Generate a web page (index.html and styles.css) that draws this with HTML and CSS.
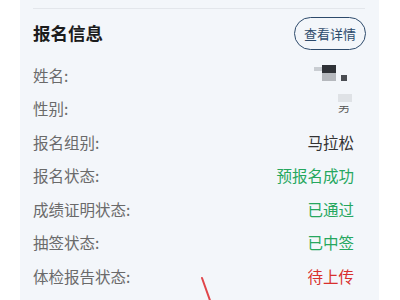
FILE: index.html
```html
<!DOCTYPE html>
<html lang="zh">
<head>
<meta charset="utf-8">
<link rel="stylesheet" href="styles.css">
</head>
<body>
<div class="card">
  <div class="divider"></div>
  <div class="head">
    <h2 class="title">报名信息</h2>
    <button class="detail">查看详情</button>
  </div>
  <div class="rows">
    <div class="row"><span class="label">姓名:</span><span class="value mosaic-name"><i class="m1"></i><i class="m2"></i><i class="m3"></i><i class="m4"></i></span></div>
    <div class="row"><span class="label">性别:</span><span class="value mosaic-sex"><i class="s1"></i><span class="s2">男</span></span></div>
    <div class="row"><span class="label">报名组别:</span><span class="value dark">马拉松</span></div>
    <div class="row"><span class="label">报名状态:</span><span class="value green">预报名成功</span></div>
    <div class="row"><span class="label">成绩证明状态:</span><span class="value green">已通过</span></div>
    <div class="row"><span class="label">抽签状态:</span><span class="value green">已中签</span></div>
    <div class="row"><span class="label">体检报告状态:</span><span class="value red">待上传</span></div>
  </div>
  <svg class="mark" width="30" height="30" viewBox="0 0 30 30"><path d="M2 2 L12 30" stroke="#e0454a" stroke-width="2" fill="none" stroke-linecap="round"/></svg>
</div>
</body>
</html>
```
FILE: styles.css
```css
* { box-sizing: border-box; }
html, body { margin: 0; padding: 0; background: #ffffff; }
body {
  font-family: "Noto Sans CJK SC", "Noto Sans", sans-serif;
  width: 400px; height: 300px; overflow: hidden;
}
.card {
  position: relative;
  margin-left: 20px;
  width: 359px;
  height: 300px;
  background: #f3f6fa;
  padding: 8px 13px 0 13px;
}
.divider { height: 1px; background: #e3e6eb; margin-right: 1px; }
.head {
  display: flex; justify-content: space-between; align-items: center;
  height: 44px; margin-top: 2px;
}
.title { margin: 0; font-size: 17.5px; font-weight: 700; color: #1c1c1c; line-height: 1; }
.detail {
  font-family: inherit;
  height: 33px; width: 72px;
  border: 1.5px solid #2d4a6b; border-radius: 17px;
  background: transparent; color: #2d4a6b;
  font-size: 13px; padding: 0;
}
.rows { margin-top: 3px; }
.row {
  display: flex; justify-content: space-between; align-items: center;
  height: 33.5px;
}
.label { font-size: 15.5px; color: #6a6a6a; }
.value { font-size: 15.5px; margin-right: 12px; }
.dark { color: #333333; }
.green { color: #26a75e; }
.red { color: #d8302d; }
.mosaic-name { position: relative; width: 40px; height: 20px; }
.mosaic-name i { position: absolute; display: block; }
.m1 { left: 0; top: 2px; width: 10px; height: 4px; background: #c9cdd2; }
.m2 { left: 8px; top: 0; width: 14px; height: 8px; background: #2f3237; }
.m3 { left: 8px; top: 8px; width: 14px; height: 8px; background: #b5b8bd; }
.m4 { left: 27px; top: 10px; width: 6px; height: 6px; background: #4a4d52; }
.mosaic-sex { position: relative; width: 16px; height: 20px; }
.s1 { position: absolute; left: 0; top: -4px; width: 14px; height: 8px; background: #dfe2e6; display: block; }
.s2 { position: absolute; left: 0; top: 3px; font-size: 12px; line-height: 1; color: #555; clip-path: inset(40% 0 0 0); }
.mark { position: absolute; left: 180px; top: 276px; }
```
